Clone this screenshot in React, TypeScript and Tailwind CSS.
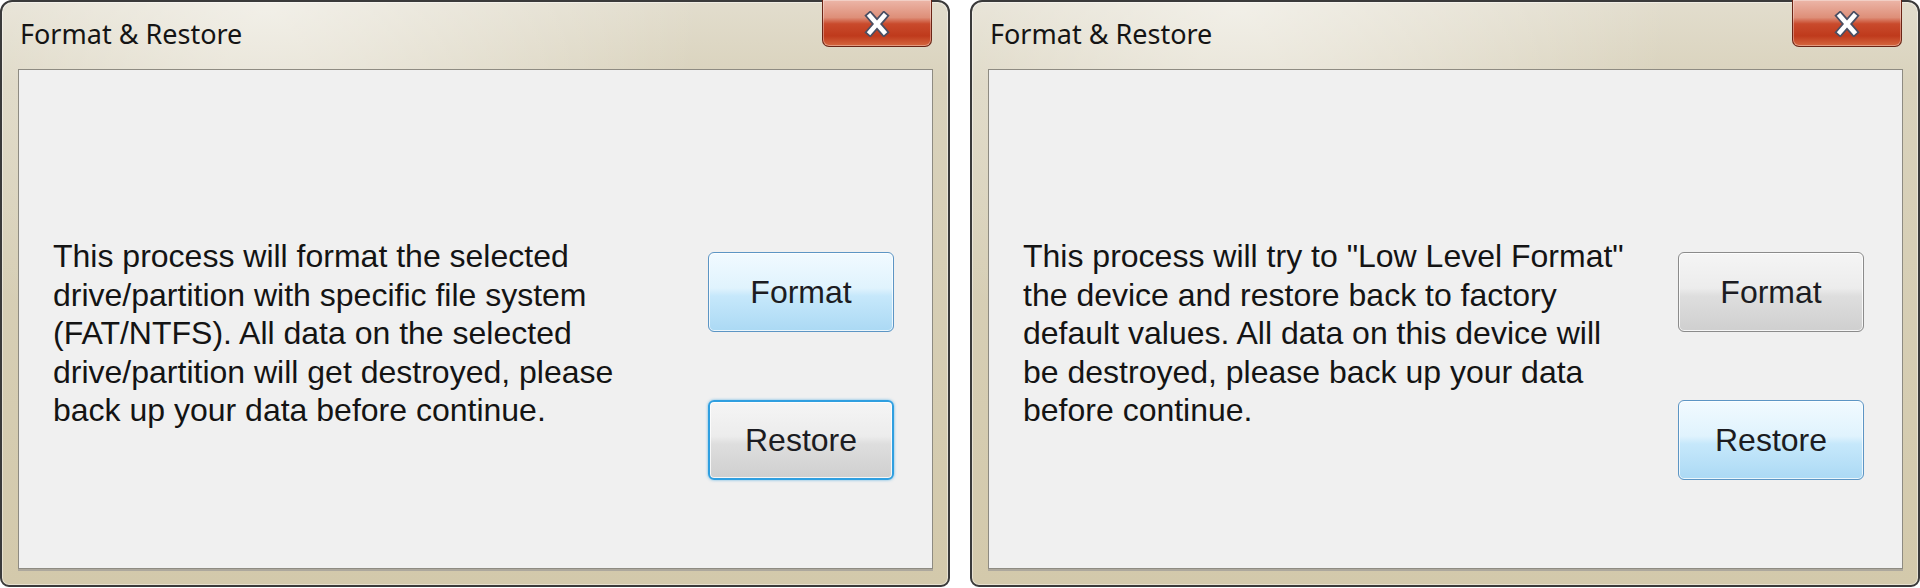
import React from "react"

type Variant = "hover" | "focus" | "normal"

const buttonStyles: Record<Variant, string> = {
  hover:
    "border border-[#5c95c4] bg-[linear-gradient(180deg,#f1faff_0%,#e0f3fd_45%,#c6e8fb_55%,#abd9f4_100%)] shadow-[inset_0_0_0_1px_rgba(255,255,255,0.75)]",
  focus:
    "border-2 border-[#2f9fe0] bg-[linear-gradient(180deg,#f5f5f5_0%,#ececec_45%,#dedede_55%,#cfcfcf_100%)] shadow-[inset_0_0_0_1px_rgba(255,255,255,0.8),0_0_3px_rgba(47,159,224,0.7)]",
  normal:
    "border border-[#8b8b8b] bg-[linear-gradient(180deg,#f5f5f5_0%,#ececec_45%,#dedede_55%,#cfcfcf_100%)] shadow-[inset_0_0_0_1px_rgba(255,255,255,0.8)]",
}

function DialogButton({ label, variant }: { label: string; variant: Variant }) {
  return (
    <button
      className={`flex h-[80px] w-[186px] items-center justify-center rounded-[6px] text-[32px] text-[#1c1c22] ${buttonStyles[variant]}`}
    >
      {label}
    </button>
  )
}

function CloseButton() {
  return (
    <div className="-mt-[2px] flex h-[47px] w-[110px] items-center justify-center rounded-b-[7px] border border-t-0 border-[#6b2516] bg-[linear-gradient(180deg,#ecb6a8_0%,#de8f79_38%,#c94a2c_52%,#bf3a1c_78%,#d5673f_100%)] shadow-[inset_0_0_0_1px_rgba(255,255,255,0.35)]">
      <svg width="26" height="26" viewBox="0 0 26 26" className="mt-[2px]">
        <g strokeLinecap="square">
          <path d="M6 5 L20 21 M20 5 L6 21" stroke="#4a4e62" strokeWidth="8" />
          <path d="M6 5 L20 21 M20 5 L6 21" stroke="#ffffff" strokeWidth="4.5" />
        </g>
      </svg>
    </div>
  )
}

function DialogWindow({
  lines,
  formatVariant,
  restoreVariant,
}: {
  lines: string[]
  formatVariant: Variant
  restoreVariant: Variant
}) {
  return (
    <div className="flex h-[587px] w-[950px] shrink-0 flex-col rounded-t-[12px] rounded-b-[9px] border-2 border-[#3a3a3a] bg-[radial-gradient(ellipse_at_28%_0%,rgba(255,255,255,0.55)_0%,rgba(255,255,255,0)_45%),linear-gradient(180deg,#e2ddcd_0%,#d9d2bc_14%,#d3c9ab_100%)] shadow-[inset_0_0_0_1px_rgba(255,255,255,0.45)]">
      {/* title bar */}
      <div className="flex h-[67px] shrink-0 items-start justify-between pl-[18px] pr-[16px]">
        <span className="mt-[15px] font-['Segoe_UI','Noto_Sans',sans-serif] text-[27px] leading-[34px] text-[#141414]">
          Format &amp; Restore
        </span>
        <CloseButton />
      </div>

      {/* client area */}
      <div className="mb-[16px] ml-[16px] mr-[15px] flex flex-1 items-start border border-[#8e8b82] bg-[#f0f0f0] pl-[34px] shadow-[0_2px_0_#ada89d] font-['Liberation_Sans',Arial,sans-serif]">
        <div className="mt-[167px] w-[655px] text-[32px] leading-[38.6px] text-[#141414]">
          {lines.map((line) => (
            <div key={line} className="whitespace-nowrap">
              {line}
            </div>
          ))}
        </div>
        <div className="mt-[182px] flex flex-col gap-[68px]">
          <DialogButton label="Format" variant={formatVariant} />
          <DialogButton label="Restore" variant={restoreVariant} />
        </div>
      </div>
    </div>
  )
}

export default function App() {
  return (
    <div className="flex h-[588px] w-[1920px] gap-[20px] overflow-hidden bg-white">
      <DialogWindow
        lines={[
          "This process will format the selected",
          "drive/partition with specific file system",
          "(FAT/NTFS). All data on the selected",
          "drive/partition will get destroyed, please",
          "back up your data before continue.",
        ]}
        formatVariant="hover"
        restoreVariant="focus"
      />
      <DialogWindow
        lines={[
          'This process will try to "Low Level Format"',
          "the device and restore back to factory",
          "default values. All data on this device will",
          "be destroyed, please back up your data",
          "before continue.",
        ]}
        formatVariant="normal"
        restoreVariant="hover"
      />
    </div>
  )
}
